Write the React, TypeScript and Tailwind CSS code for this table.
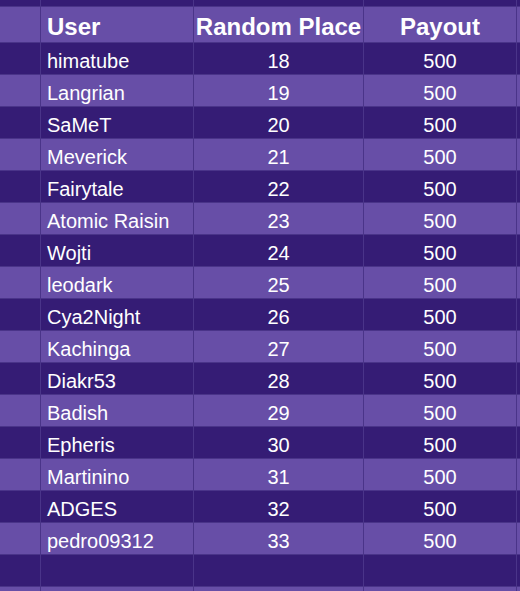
import React from "react";

const rows = [
  ["himatube", 18],
  ["Langrian", 19],
  ["SaMeT", 20],
  ["Meverick", 21],
  ["Fairytale", 22],
  ["Atomic Raisin", 23],
  ["Wojti", 24],
  ["leodark", 25],
  ["Cya2Night", 26],
  ["Kachinga", 27],
  ["Diakr53", 28],
  ["Badish", 29],
  ["Epheris", 30],
  ["Martinino", 31],
  ["ADGES", 32],
  ["pedro09312", 33],
] as const;

const DARK = "bg-[#351c75]";
const LIGHT = "bg-[#674ea7]";

const Row = ({
  bg,
  height,
  cells,
  header = false,
}: {
  bg: string;
  height: string;
  cells: [string, string, string];
  header?: boolean;
}) => {
  const text = header
    ? "text-[24px] font-bold leading-[28px] pb-[1px]"
    : "text-[20px] leading-[23px] pb-[1px]";
  return (
    <div className={`grid grid-cols-[41px_153px_170px_153px_1fr] ${bg} ${height} border-b border-[#4a3489]`}>
      <div className="border-r border-[#4a3489]" />
      <div className={`flex items-end pl-[6px] border-r border-[#4a3489] ${text}`}>{cells[0]}</div>
      <div className={`flex items-end justify-center border-r border-[#4a3489] ${text}`}>{cells[1]}</div>
      <div className={`flex items-end justify-center border-r border-[#4a3489] ${text}`}>{cells[2]}</div>
      <div />
    </div>
  );
};

export default function App() {
  return (
    <div className="w-[520px] h-[591px] overflow-hidden bg-[#674ea7] text-white [font-family:'Liberation_Sans',Arial,sans-serif]">
      <Row bg={DARK} height="h-[7px]" cells={["", "", ""]} />
      <Row bg={LIGHT} height="h-[36px]" cells={["User", "Random Place", "Payout"]} header />
      {rows.map(([name, place], i) => (
        <Row
          key={name}
          bg={i % 2 === 0 ? DARK : LIGHT}
          height="h-[32px]"
          cells={[name, String(place), "500"]}
        />
      ))}
      <Row bg={DARK} height="h-[32px]" cells={["", "", ""]} />
      <Row bg={LIGHT} height="h-[32px]" cells={["", "", ""]} />
    </div>
  );
}
